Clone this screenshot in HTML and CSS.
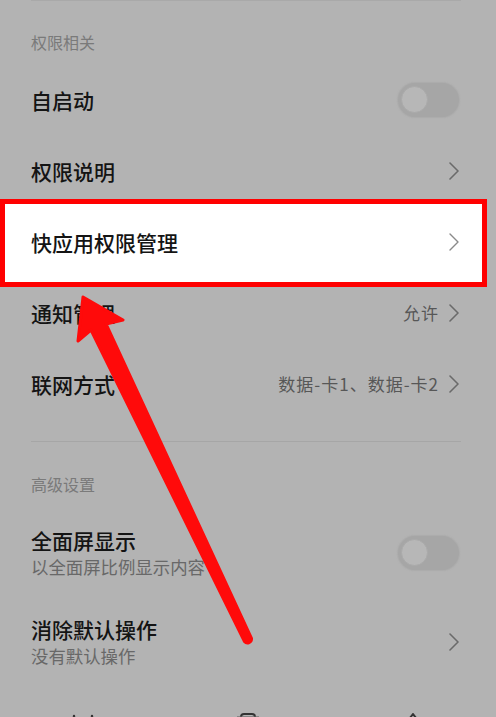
FILE: index.html
```html
<!DOCTYPE html>
<html lang="zh-CN">
<head>
<meta charset="utf-8">
<link rel="stylesheet" href="styles.css">
</head>
<body>
<div class="page">
  <div class="topline"></div>
  <div class="section-head">权限相关</div>

  <div class="row">
    <span class="title">自启动</span>
    <span class="toggle"><span class="knob"></span></span>
  </div>

  <div class="row">
    <span class="title">权限说明</span>
    <span class="chev"><svg viewBox="0 0 10 18" width="10" height="18"><path d="M1 1 L9 9 L1 17" fill="none" stroke="#6a6a6a" stroke-width="1.6" stroke-linecap="round" stroke-linejoin="round"/></svg></span>
  </div>

  <div class="row highlight">
    <span class="title">快应用权限管理</span>
    <span class="chev"><svg viewBox="0 0 10 18" width="10" height="18"><path d="M1 1 L9 9 L1 17" fill="none" stroke="#8a8a8a" stroke-width="1.4" stroke-linecap="round" stroke-linejoin="round"/></svg></span>
  </div>

  <div class="row">
    <span class="title">通知管理</span>
    <span class="right"><span class="value">允许</span><span class="chev"><svg viewBox="0 0 10 18" width="10" height="18"><path d="M1 1 L9 9 L1 17" fill="none" stroke="#6a6a6a" stroke-width="1.6" stroke-linecap="round" stroke-linejoin="round"/></svg></span></span>
  </div>

  <div class="row">
    <span class="title">联网方式</span>
    <span class="right"><span class="value">数据-卡1、数据-卡2</span><span class="chev"><svg viewBox="0 0 10 18" width="10" height="18"><path d="M1 1 L9 9 L1 17" fill="none" stroke="#6a6a6a" stroke-width="1.6" stroke-linecap="round" stroke-linejoin="round"/></svg></span></span>
  </div>

  <div class="divider"></div>
  <div class="section-head second">高级设置</div>

  <div class="row tall">
    <span class="texts"><span class="title">全面屏显示</span><span class="sub">以全面屏比例显示内容</span></span>
    <span class="toggle"><span class="knob"></span></span>
  </div>

  <div class="row tall">
    <span class="texts"><span class="title">消除默认操作</span><span class="sub">没有默认操作</span></span>
    <span class="chev"><svg viewBox="0 0 10 18" width="10" height="18"><path d="M1 1 L9 9 L1 17" fill="none" stroke="#6a6a6a" stroke-width="1.6" stroke-linecap="round" stroke-linejoin="round"/></svg></span>
  </div>

  <div class="navbar">
    <span class="nav-icon"><svg width="30" height="20" viewBox="0 0 30 20"><path d="M6 3 V14 M24 3 V14" stroke="#333" stroke-width="2.4" stroke-linecap="round"/></svg></span>
    <span class="nav-icon"><svg width="30" height="20" viewBox="0 0 30 20"><rect x="8" y="1" width="14" height="16" rx="3" fill="none" stroke="#333" stroke-width="2"/><path d="M4 4 H26" stroke="#666" stroke-width="1.2"/></svg></span>
    <span class="nav-icon"><svg width="30" height="20" viewBox="0 0 30 20"><path d="M15 1 L25 14 H5 Z" fill="none" stroke="#333" stroke-width="2" stroke-linejoin="round"/></svg></span>
  </div>

  <svg class="arrow" width="496" height="717" viewBox="0 0 496 717">
    <path d="M83 297 L123 320 L106 324 L251.5 638.5 A4 4 0 0 1 244.5 641.5 L91 330 L78 341 Z" fill="#ff0a0a" stroke="#ff0a0a" stroke-width="3" stroke-linejoin="round"/>
  </svg>
</div>
</body>
</html>
```

FILE: styles.css
```css
html, body {
  margin: 0;
  padding: 0;
  background: #b3b3b3;
}
body {
  font-family: "Noto Sans CJK SC", "Noto Sans", sans-serif;
  color: #111;
  overflow: hidden;
}
.page {
  position: relative;
  width: 496px;
  height: 717px;
  overflow: hidden;
}
.topline {
  height: 1px;
  margin: 0 35px 0 31px;
  background: #a9a9a9;
}
.section-head {
  height: 63px;
  box-sizing: border-box;
  padding: 30px 31px 0;
  font-size: 16px;
  line-height: 22px;
  color: #7a7a7a;
}
.section-head.second {
  height: 66px;
  padding-top: 31px;
}
.row {
  height: 71px;
  box-sizing: border-box;
  padding: 0 37px 0 31px;
  display: flex;
  align-items: center;
  justify-content: space-between;
  position: relative;
}
.row.tall {
  height: 89px;
}
.title {
  font-size: 21px;
  line-height: 28px;
  font-weight: 500;
  color: #141414;
  position: relative;
  z-index: 1;
}
.texts {
  display: flex;
  flex-direction: column;
}
.sub {
  font-size: 17.4px;
  line-height: 25px;
  color: #686868;
}
.right {
  display: flex;
  align-items: center;
  gap: 10px;
}
.value {
  font-size: 17px;
  line-height: 24px;
  letter-spacing: 1px;
  color: #575757;
}
.chev {
  display: flex;
  width: 10px;
  height: 18px;
  position: relative;
  z-index: 1;
}
.toggle {
  width: 61px;
  height: 34px;
  border-radius: 17px;
  background: #a6a6a6;
  box-sizing: border-box;
  padding: 3px;
  display: flex;
  align-items: center;
  box-shadow: 0 0 1px 1px rgba(166,166,166,0.6);
}
.knob {
  width: 27px;
  height: 27px;
  border-radius: 50%;
  background: #b7b7b7;
  box-sizing: border-box;
  border: 1px solid #aaaaaa;
}
.highlight::before {
  content: "";
  position: absolute;
  left: 0;
  right: 9px;
  top: -7px;
  bottom: -10px;
  background: #ffffff;
  border: 5px solid #ff0000;
  z-index: 0;
}
.divider {
  height: 1px;
  margin: 22px 35px 0 31px;
  background: #a6a6a6;
}
.navbar {
  height: 60px;
  box-sizing: border-box;
  padding-top: 27px;
  display: grid;
  grid-template-columns: 1fr 1fr 1fr;
  justify-items: center;
  align-items: start;
}
.nav-icon {
  display: flex;
}
.arrow {
  position: absolute;
  left: 0;
  top: 0;
  z-index: 5;
  pointer-events: none;
}
```
